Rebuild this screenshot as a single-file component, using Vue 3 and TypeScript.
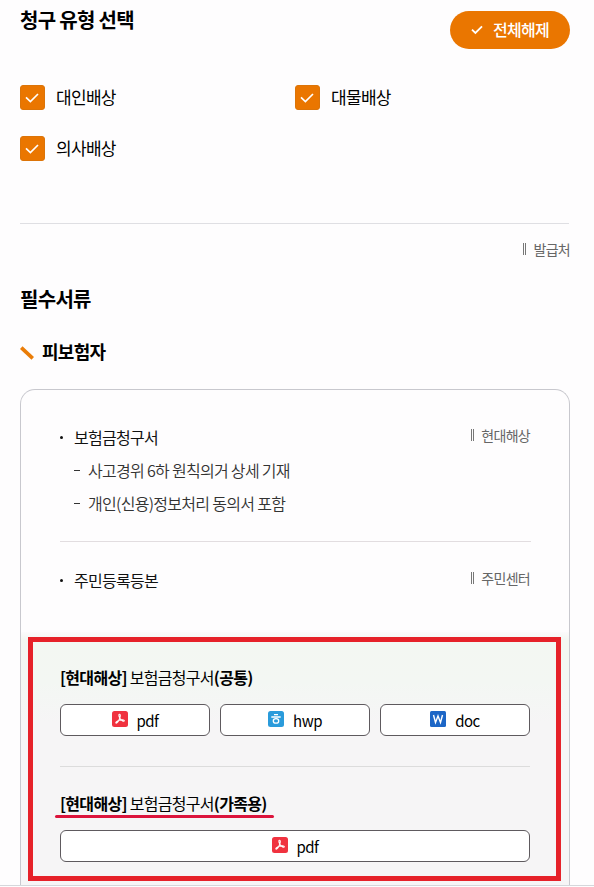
<script setup lang="ts">
import { ref } from 'vue'

type FileKind = 'pdf' | 'hwp' | 'doc'

interface ClaimType {
  label: string
  checked: boolean
}

interface RequiredDoc {
  name: string
  issuer: string
  notes: string[]
}

interface FormGroup {
  company: string
  title: string
  variant: string
  files: FileKind[]
  underlined: boolean
}

const claimTypes = ref<ClaimType[]>([
  { label: '대인배상', checked: true },
  { label: '대물배상', checked: true },
  { label: '의사배상', checked: true },
])

const documents: RequiredDoc[] = [
  {
    name: '보험금청구서',
    issuer: '현대해상',
    notes: ['사고경위 6하 원칙의거 상세 기재', '개인(신용)정보처리 동의서 포함'],
  },
  { name: '주민등록등본', issuer: '주민센터', notes: [] },
]

const forms: FormGroup[] = [
  { company: '[현대해상]', title: '보험금청구서', variant: '(공통)', files: ['pdf', 'hwp', 'doc'], underlined: false },
  { company: '[현대해상]', title: '보험금청구서', variant: '(가족용)', files: ['pdf'], underlined: true },
]

function toggle(item: ClaimType) {
  item.checked = !item.checked
}

function clearAll() {
  claimTypes.value.forEach((item) => (item.checked = false))
}
</script>

<template>
  <main class="page">
    <header class="head">
      <h2 class="heading">청구 유형 선택</h2>
      <button class="clear" type="button" @click="clearAll">
        <svg class="clear-icon" viewBox="0 0 12 10"><path d="M1 4.6 4.4 8 11 1.4" /></svg>
        <span>전체해제</span>
      </button>
    </header>

    <div class="types">
      <div v-for="item in claimTypes" :key="item.label" class="type" @click="toggle(item)">
        <span class="box" :class="{ on: item.checked }">
          <svg v-if="item.checked" viewBox="0 0 14 10"><path d="M1 4.4 5.4 8.6 13 1" /></svg>
        </span>
        <span class="type-label">{{ item.label }}</span>
      </div>
    </div>

    <div class="legend"><span class="issuer">발급처</span></div>

    <h2 class="heading docs-heading">필수서류</h2>
    <h3 class="sub-heading">
      <svg class="slash" viewBox="0 0 14 14"><path d="M1.2 1.6 12.800 12.400" /></svg>
      <span>피보험자</span>
    </h3>

    <section class="card">
      <ul class="docs">
        <li v-for="doc in documents" :key="doc.name" class="doc">
          <div class="doc-row">
            <span class="doc-name">{{ doc.name }}</span>
            <span class="issuer">{{ doc.issuer }}</span>
          </div>
          <p v-for="note in doc.notes" :key="note" class="note">{{ note }}</p>
        </li>
      </ul>

      <div class="forms">
        <div class="frame"></div>
        <div v-for="form in forms" :key="form.variant" class="form">
          <p class="form-title">
            <b>{{ form.company }}</b> {{ form.title }}<b>{{ form.variant }}</b>
            <span v-if="form.underlined" class="marker"></span>
          </p>
          <div class="files">
            <button v-for="kind in form.files" :key="kind" type="button" class="file">
              <svg v-if="kind === 'pdf'" class="file-icon" viewBox="0 0 16 16">
                <rect width="16" height="16" rx="2.5" fill="#f0323f" />
                <path
                  d="M7.3 3.2c1.4-.2 1.1 2.2.4 4.1-.8 2.1-2.2 4.9-3.5 4.8-1.2-.3.6-2.2 3.1-2.8 2.3-.6 5.2-.7 5 .5-.3 1.1-2.8-.1-4-1.9C7.200 6.500 6.200 3.500 7.300 3.200z"
                  fill="none" stroke="#fff" stroke-width="1.100" stroke-linejoin="round"
                />
              </svg>
              <svg v-else-if="kind === 'hwp'" class="file-icon" viewBox="0 0 16 16">
                <rect width="16" height="16" rx="2.5" fill="#2a9bdb" />
                <path d="M6 3.600h4M3.300 6h9.400" fill="none" stroke="#fff" stroke-width="1.300" />
                <ellipse cx="8" cy="9.900" rx="2.700" ry="2.200" fill="none" stroke="#fff" stroke-width="1.300" />
              </svg>
              <svg v-else class="file-icon" viewBox="0 0 16 16">
                <rect width="16" height="16" rx="1.5" fill="#1c66c6" />
                <path d="M3.500 4 5.500 11.500 8 5 10.500 11.500 12.500 4" fill="none" stroke="#fff" stroke-width="1.400" />
              </svg>
              <span class="file-label">{{ kind }}</span>
            </button>
          </div>
        </div>
      </div>
    </section>
    <div class="page-end"></div>
  </main>
</template>

<style>
body {
  margin: 0;
  background: #fefdfe;
}
</style>

<style scoped>
.page {
  box-sizing: border-box;
  height: 887px;
  overflow: hidden;
  font-family: 'Noto Sans CJK KR', 'Noto Sans', sans-serif;
  letter-spacing: -0.7px;
  color: #000;
  display: flex;
  flex-direction: column;
}
h2,
h3,
p,
ul {
  margin: 0;
  padding: 0;
  list-style: none;
}
button {
  font: inherit;
  letter-spacing: inherit;
  padding: 0;
}
.head {
  display: flex;
  justify-content: space-between;
  align-items: flex-start;
  padding: 5px 24px 0 20px;
  height: 79px;
  box-sizing: border-box;
}
.heading {
  font-size: 20px;
  line-height: 30px;
  font-weight: 700;
}
.clear {
  margin-top: 6px;
  width: 120px;
  height: 38px;
  border: 0;
  border-radius: 19px;
  background: #ea7600;
  color: #fff;
  font-size: 16px;
  line-height: 36px;
  font-weight: 500;
  display: flex;
  align-items: center;
  justify-content: center;
  gap: 10px;
}
.clear span {
  height: 38px;
}
.clear-icon {
  width: 12px;
  height: 10px;
  fill: none;
  stroke: #fff;
  stroke-width: 1.8;
}
.types {
  display: grid;
  grid-template-columns: 275px 1fr;
  grid-auto-rows: 25px;
  row-gap: 26px;
  margin: 6px 25px 0 20px;
  padding-bottom: 62px;
  border-bottom: 1px solid #dfdfe3;
}
.type {
  display: flex;
  align-items: center;
  gap: 11px;
}
.box {
  box-sizing: border-box;
  width: 25px;
  height: 25px;
  border-radius: 3px;
  border: 1px solid #bbb;
  display: flex;
  align-items: center;
  justify-content: center;
}
.box.on {
  background: #ea7600;
  border-color: #dc7408;
}
.box svg {
  width: 14px;
  height: 10px;
  margin-right: 1px;
  fill: none;
  stroke: #fff;
  stroke-width: 1.7;
}
.type-label {
  height: 25px;
  font-size: 17px;
  line-height: 23px;
}
.legend {
  display: flex;
  justify-content: flex-end;
  padding: 15px 24px 0 0;
}
.issuer {
  display: flex;
  align-items: center;
  font-size: 14px;
  line-height: 20px;
  color: #666;
}
.issuer::before {
  content: '';
  box-sizing: border-box;
  width: 3px;
  height: 12px;
  margin-right: 7px;
  border: solid #777;
  border-width: 0 1px;
}
.docs-heading {
  margin: 25px 0 0 20px;
}
.sub-heading {
  display: flex;
  align-items: center;
  gap: 8px;
  margin: 23px 0 0 20px;
  font-size: 18px;
  line-height: 28px;
}
.slash {
  width: 14px;
  height: 14px;
  margin-top: 4px;
  fill: none;
  stroke: #ea7d08;
  stroke-width: 3.8;
}
.card {
  box-sizing: border-box;
  margin: 24px 24px 0 20px;
  height: 496px;
  border: 1px solid #c8c8ce;
  border-bottom: 0;
  border-radius: 15px 15px 0 0;
  display: flex;
  flex-direction: column;
}
.page-end {
  border-top: 1px solid #d5d7db;
}
.docs {
  padding: 34px 38px 0 39px;
  height: 242px;
  box-sizing: border-box;
}
.doc {
  padding-bottom: 21px;
}
.doc + .doc {
  border-top: 1px solid #e2dde0;
  padding-top: 25px;
}
.doc-row {
  display: flex;
  justify-content: space-between;
  align-items: flex-start;
  height: 30px;
}
.doc-name {
  display: flex;
  align-items: center;
  font-size: 16px;
  line-height: 26px;
  color: #111;
}
.doc-name::before {
  content: '';
  width: 3px;
  height: 3px;
  margin-right: 11px;
  border-radius: 50%;
  background: #111;
}
.doc .issuer {
  padding-right: 1px;
  margin-top: 1px;
}
.note {
  display: flex;
  align-items: center;
  padding-left: 14px;
  font-size: 16px;
  line-height: 33px;
  font-weight: 350;
  color: #333;
}
.note::before {
  content: '';
  width: 6px;
  height: 1px;
  margin-right: 8px;
  background: #333;
}
.forms {
  position: relative;
  flex: 1;
  padding: 32px 39px 0;
  background: linear-gradient(#fcfbfc, #f3f7f2 8px, #f3f7f3 50px, #f6f5f6 90px);
}
.frame {
  position: absolute;
  left: 7px;
  top: 5px;
  right: 8px;
  bottom: 4px;
  border: 5px solid #e62129;
}
.form + .form {
  margin-top: 30px;
  padding-top: 23px;
  border-top: 1px solid #dcdcdc;
}
.form-title {
  position: relative;
  font-size: 16px;
  line-height: 26px;
}
.form-title b {
  font-weight: 700;
}
.marker {
  position: absolute;
  left: -5px;
  top: 25px;
  width: 219px;
  height: 3px;
  border-radius: 2px;
  background: #dc143c;
}
.files {
  display: flex;
  gap: 10px;
  margin-top: 14px;
}
.file {
  flex: 1;
  box-sizing: border-box;
  height: 32px;
  border: 1px solid #5e5a5e;
  border-radius: 6px;
  background: #fff;
  color: #000;
  font-size: 15px;
  line-height: 32px;
  letter-spacing: -0.5px;
  display: flex;
  align-items: center;
  justify-content: center;
  gap: 9px;
}
.file-label {
  height: 30px;
}
.file-icon {
  width: 16px;
  height: 16px;
  margin-bottom: 2px;
}
</style>
